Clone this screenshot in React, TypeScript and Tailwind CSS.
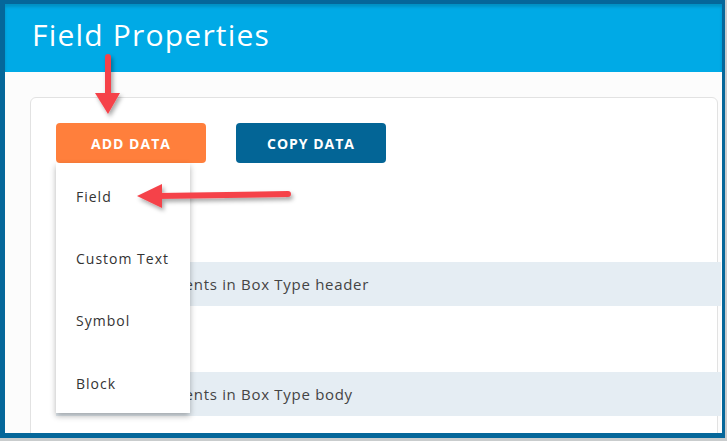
import React from 'react';

const menuItems = ['Field', 'Custom Text', 'Symbol', 'Block'];

export default function App() {
  return (
    <div className="relative w-[727px] h-[441px] overflow-hidden bg-[#c9cccd] font-['Open_Sans',sans-serif]">
      {/* Window frame */}
      <div className="w-[725px] h-[438px] bg-white border-t-[4px] border-l-[5px] border-r-[3px] border-b-[5px] border-[#05679a] overflow-hidden shadow-[inset_-4px_0_4px_rgba(0,0,0,0.12)] flex flex-col">
        {/* Header */}
        <div className="h-[68px] shrink-0 bg-[#00aae6] shadow-[inset_0_3px_3px_rgba(0,0,0,0.15)] flex items-center pl-[27px] pb-[6px]">
          <h1 className="text-[30px] text-white leading-none tracking-[1.2px]">Field Properties</h1>
        </div>

        {/* Body */}
        <div className="flex-1 bg-[#fcfcfc] pl-[25px] pt-[25px] pr-[4px]">
          <div className="relative h-[400px] bg-white border border-[#e2e2e2] rounded-md pl-[25px] pt-[25px]">
            <div className="flex gap-[30px]">
              <button className="w-[150px] h-[40px] rounded-[4px] bg-[#ff7f3c] text-white text-[14px] font-bold tracking-[1px]">
                ADD DATA
              </button>
              <button className="w-[150px] h-[40px] rounded-[4px] bg-[#036596] text-white text-[14px] font-bold tracking-[1px]">
                COPY DATA
              </button>
            </div>

            <div className="mt-[99px] flex flex-col gap-[66px] -mr-[4px]">
              <div className="h-[44px] bg-[#e5edf3] flex items-center pl-[12px] text-[15px] tracking-[0.7px] text-[#444]">
                Configure elements in Box Type header
              </div>
              <div className="h-[44px] bg-[#e5edf3] flex items-center pl-[12px] text-[15px] tracking-[0.7px] text-[#444]">
                Configure elements in Box Type body
              </div>
            </div>

            {/* Dropdown menu */}
            <div className="absolute left-[25px] top-[65px] w-[134px] h-[250px] bg-white shadow-[0_3px_6px_rgba(0,0,0,0.3)] pt-[2px]">
              {menuItems.map((item) => (
                <div key={item} className="h-[62.3px] flex items-center pl-[20px] text-[14px] tracking-[1px] text-[#333]">
                  {item}
                </div>
              ))}
            </div>
          </div>
        </div>
      </div>

      {/* Annotation arrows */}
      <svg className="absolute inset-0 pointer-events-none" width="727" height="441" viewBox="0 0 727 441">
        <defs>
          <filter id="sh" x="-20%" y="-20%" width="140%" height="160%">
            <feDropShadow dx="2" dy="3" stdDeviation="2" floodColor="#000" floodOpacity="0.35" />
          </filter>
        </defs>
        <g fill="#f5434a" stroke="#f5434a" filter="url(#sh)">
          <line x1="108" y1="57" x2="108" y2="95" strokeWidth="6" strokeLinecap="round" />
          <polygon points="95,93 120,93 108,114" stroke="none" />
          <line x1="288" y1="194" x2="158" y2="196" strokeWidth="6" strokeLinecap="round" />
          <polygon points="162,184 162,208 137,196" stroke="none" />
        </g>
      </svg>
    </div>
  );
}
